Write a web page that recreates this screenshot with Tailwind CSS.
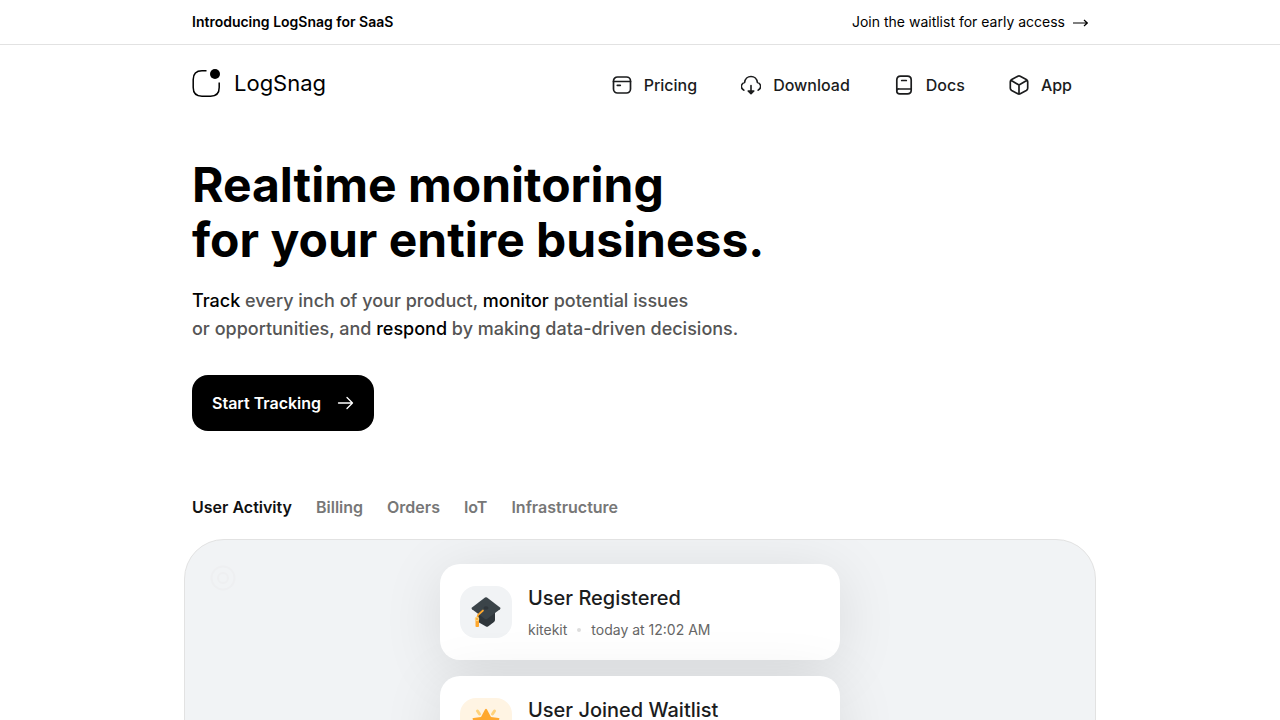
<!DOCTYPE html>
<html lang="en">
<head>
<meta charset="utf-8">
<meta name="viewport" content="width=device-width, initial-scale=1">
<title>LogSnag</title>
<script src="https://cdn.jsdelivr.net/npm/@tailwindcss/browser@4"></script>
</head>
<body class="flex h-screen flex-col overflow-hidden bg-white font-['Inter',sans-serif] text-black">
<div class="shrink-0 border-b border-[#e2e2e2]">
  <div class="mx-auto flex h-11 max-w-4xl items-center justify-between text-sm">
    <p class="font-semibold">Introducing LogSnag for SaaS</p>
    <a href="#waitlist" class="flex items-center gap-2">Join the waitlist for early access
      <svg class="h-4 w-[15px]" viewBox="0 0 15 16" fill="none" stroke="currentColor" stroke-width="1.200"><path d="M0 9h14M11 6l3.300 3L11 12"/></svg>
    </a>
  </div>
</div>
<header class="mx-auto flex w-full max-w-4xl shrink-0 items-center justify-between pt-[22px]">
  <a href="#home" class="flex items-center gap-3 pb-1">
    <svg class="h-[30px] w-[30px]" viewBox="0 0 30 30" fill="none" stroke="currentColor" stroke-width="1.500"><path d="M14.500 2.700H10Q1.200 2.700 1.200 11.500V19.500Q1.200 28.200 10 28.200H18.500Q27.200 28.200 27.200 19.500V14.500"/><circle cx="23" cy="6" r="5" fill="currentColor" stroke="none"/></svg>
    <span class="text-[22px] leading-8">LogSnag</span>
  </a>
  <nav class="flex items-center gap-11 pr-4 font-medium text-[#1b1c1d]">
    <a href="#pricing" class="flex items-center gap-3"><svg class="h-5 w-5" viewBox="0 0 20 20" fill="none" stroke="currentColor" stroke-width="1.700" stroke-linecap="round"><rect x="1.500" y="2" width="17" height="16" rx="4"/><path d="M1.500 6.500h17M5.300 10.300h3"/></svg>Pricing</a>
    <a href="#download" class="flex items-center gap-3"><svg class="h-5 w-5" viewBox="0 0 20 20" fill="none" stroke="currentColor" stroke-width="1.600" stroke-linecap="round" stroke-linejoin="round"><path d="M2.800 15.200C.7 13.800-.1 11.500.8 9.700 1.400 8.400 2.500 7.700 3.600 7.500 4 4 6.700 1.500 10 1.500S16 4 16.400 7.500C17.500 7.700 18.600 8.400 19.200 9.700 20.100 11.500 19.300 13.800 17.200 15.200M10 10.500V18"/><path d="m7.200 16 2.800 2.700 2.800-2.700z" fill="currentColor"/></svg>Download</a>
    <a href="#docs" class="flex items-center gap-3"><svg class="h-5 w-5" viewBox="0 0 20 20" fill="none" stroke="currentColor" stroke-width="1.700" stroke-linecap="round"><path d="M2.800 16V5Q2.800 1.200 6.600 1.200h6.800Q17.200 1.200 17.200 5v10.200Q17.200 18.800 13.400 18.800H5.600Q2.800 18.800 2.800 16.200T5.600 14h11.600M7.700 5.500h4.600"/></svg>Docs</a>
    <a href="#app" class="flex items-center gap-3"><svg class="h-5 w-5" viewBox="0 0 20 20" fill="none" stroke="currentColor" stroke-width="1.700" stroke-linejoin="round"><path d="M10 .9Q10.600.9 11.200 1.200L17.300 4.500Q18.700 5.300 18.700 6.700v6.600Q18.700 14.700 17.300 15.500L11.200 18.800Q10 19.400 8.800 18.800L2.700 15.500Q1.300 14.700 1.300 13.300V6.700Q1.300 5.300 2.700 4.500L8.800 1.200Q9.400.9 10 .9ZM1.900 5.300 10 10l8.100-4.700M10 10v9"/></svg>App</a>
  </nav>
</header>
<main class="flex min-h-0 w-full grow flex-col">
  <section class="mx-auto w-full max-w-4xl shrink-0 pt-[54px]">
    <h1 class="text-5xl leading-[55px] font-bold">Realtime monitoring<br>for your entire business.</h1>
    <p class="mt-5 text-lg leading-7 font-medium text-[#555]"><span class="text-black">Track</span> every inch of your product, <span class="text-black">monitor</span> potential issues<br>or opportunities, and <span class="text-black">respond</span> by making data-driven decisions.</p>
    <button type="button" class="mt-8 flex h-14 items-center gap-4 rounded-2xl bg-black px-5 font-semibold text-white">Start Tracking
      <svg class="h-4 w-[17px]" viewBox="0 0 17 16" fill="none" stroke="currentColor" stroke-width="1.300" stroke-linecap="round" stroke-linejoin="round"><path d="M1.500 8h14M10 2.500 15.500 8 10 13.500"/></svg>
    </button>
    <div class="mt-16 flex gap-6 font-semibold text-[#777]">
      <button type="button" class="text-[#111]">User Activity</button>
      <button type="button">Billing</button>
      <button type="button">Orders</button>
      <button type="button">IoT</button>
      <button type="button">Infrastructure</button>
    </div>
  </section>
  <section class="relative mx-auto mt-5 w-full max-w-[912px] shrink-0 overflow-hidden rounded-[40px] border border-[#e2e2e2] bg-[#f1f3f5] py-6">
    <svg class="absolute top-6 left-6 h-7 w-7" viewBox="0 0 28 28" fill="none" stroke="#eeeff1" stroke-width="2" aria-hidden="true"><circle cx="14" cy="14" r="11.500"/><circle cx="14" cy="14" r="5"/></svg>
    <ul class="mx-auto flex max-w-[400px] flex-col gap-4">
      <li class="relative flex h-24 items-center gap-4 rounded-[20px] bg-white px-5 shadow-[0_8px_60px_rgba(0,0,0,0.1)]">
        <span class="flex h-[52px] w-[52px] shrink-0 items-center justify-center rounded-2xl bg-[#f1f3f5]">
          <svg class="h-8 w-8" viewBox="0 0 32 32"><path d="M8 17v8q0 1 1 1.500l7 4q1 .5 2 0l6-4.500q1-1 1-2v-8z" fill="#2f363b"/><path d="M15 1.500q1-.7 2 0l13 10q1 .9 0 1.800l-13 9.700q-1 .7-2 0L2 13.300q-1-.9 0-1.800z" fill="#3b4449"/><ellipse cx="16" cy="12" rx="2.500" ry="1.700" fill="#2f363b"/><path d="m13 14.500-5 4.500-1 4" fill="none" stroke="#ffa82e" stroke-width="1.700" stroke-linecap="round"/><path d="M5.500 24h3.500v6.500q-1.800 1-3.500 0z" fill="#ffa82e"/><circle cx="7" cy="23" r="2.300" fill="#ffd27a"/><circle cx="7" cy="23" r="1" fill="#ffa82e"/></svg>
        </span>
        <div>
          <h2 class="text-xl leading-7 font-medium text-[#1b1c1d]">User Registered</h2>
          <p class="mt-2 flex items-center gap-[10px] text-sm text-[#666]">kitekit<span class="h-1 w-1 rounded-full bg-[#ddd]"></span>today at 12:02 AM</p>
        </div>
      </li>
      <li class="relative flex h-24 items-center gap-4 rounded-[20px] bg-white px-5 shadow-[0_8px_60px_rgba(0,0,0,0.1)]">
        <span class="flex h-[52px] w-[52px] shrink-0 items-center justify-center rounded-2xl bg-[#fff4e3]">
          <svg class="h-8 w-8" viewBox="0 0 32 32"><path d="m7.500 3 2 3M24.500 3l-2 3" stroke="#ffd27a" stroke-width="3" stroke-linecap="round"/><path d="M15 1.500q1-1.500 2 0l4 7.500 7.500 1q1.700.4.500 1.800l-5.800 5.700 1.800 8.500q0 1.500-1.300.8L16 23l-7.700 3.800q-1.300.7-1.300-.8l1.800-8.500L3 11.800Q1.800 10.400 3.500 10l7.500-1z" fill="#ffa82e"/></svg>
        </span>
        <div class="min-h-14">
          <h2 class="text-xl leading-7 font-medium text-[#1b1c1d]">User Joined Waitlist</h2>
        </div>
      </li>
    </ul>
  </section>
</main>
</body>
</html>
